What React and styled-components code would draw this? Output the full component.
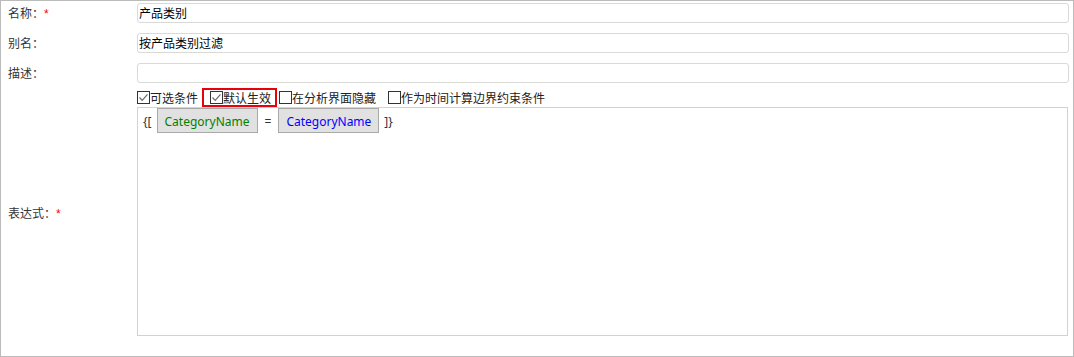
import React from "react";
import styled, { createGlobalStyle } from "styled-components";

const Global = createGlobalStyle`
  html, body { margin: 0; padding: 0; background: #fff; }
  body { font-family: "Noto Sans CJK SC", "Noto Sans", sans-serif; font-size: 12px; color: #333; }
  * { box-sizing: border-box; }
`;

const Frame = styled.div`
  width: 1074px;
  height: 357px;
  border: 1px solid #bbbbbb;
  background: #fff;
`;

const Form = styled.div`
  display: grid;
  grid-template-columns: 136px 1fr;
  grid-template-rows: 30px 30px 25px 19px 229px;
  padding: 2px 4px 20px 0;
`;

const Label = styled.div`
  padding-left: 7px;
  height: 20px;
  line-height: 20px;
  font-size: 12px;
  color: #333;
  white-space: nowrap;
  ${(p) => p.$span && `grid-row: span ${p.$span}; align-self: center; height: auto; margin-top: 2px;`}
`;

const Required = styled.span`
  color: #ff0000;
  font-family: "Liberation Sans", sans-serif;
  font-size: 12px;
`;

const Input = styled.div`
  height: 20px;
  border: 1px solid #d9d9d6;
  border-radius: 3px;
  padding-left: 1px;
  line-height: 18px;
  font-size: 12px;
  color: #000;
  white-space: nowrap;
`;

const OptionRow = styled.div`
  display: flex;
  align-items: stretch;
  height: 19px;
`;

const Option = styled.label`
  position: relative;
  display: flex;
  align-items: center;
  margin-right: ${(p) => p.$gap || 0}px;
  font-size: 12px;
  color: #222;
  white-space: nowrap;
  ${(p) =>
    p.$highlight &&
    `&::after {
      content: "";
      position: absolute;
      top: 0;
      bottom: 0;
      left: -8px;
      right: -6px;
      border: 2px solid #e8000b;
      pointer-events: none;
    }`}
`;

const Box = styled.svg`
  width: 13px;
  height: 13px;
  flex: none;
  display: block;
`;

const Check = ({ checked }) => (
  <Box viewBox="0 0 13 13">
    <rect x="0.5" y="0.5" width="12" height="12" fill="#fff" stroke="#333" strokeWidth="1" />
    {checked && (
      <path d="M2.5 6.5 L5.2 9.3 L10.5 3.3" fill="none" stroke="#6a6a6a" strokeWidth="1.2" />
    )}
  </Box>
);

const Expression = styled.div`
  border: 1px solid #d4d2cc;
  margin-right: 1px;
  padding: 0 5px;
  display: flex;
  align-items: flex-start;
  gap: 5px;
`;

const Bracket = styled.span`
  font-family: "Noto Sans", sans-serif;
  font-size: 12px;
  color: #333;
  line-height: 25px;
  padding-top: 1px;
  ${(p) => p.$op && `margin: 0 2px;`}
`;

const Token = styled.span`
  height: 25px;
  line-height: 23px;
  border: 1px solid #a9a9a9;
  background: #e1e1e1;
  padding: 1px 7px 0;
  font-family: "Noto Sans", sans-serif;
  font-size: 12px;
  color: ${(p) => p.$color};
`;

export default function App() {
  return (
    <>
      <Global />
      <Frame>
        <Form>
          <Label>
            名称：<Required>*</Required>
          </Label>
          <Input>产品类别</Input>
          <Label>别名：</Label>
          <Input>按产品类别过滤</Input>
          <Label>描述：</Label>
          <Input />
          <Label $span={2}>
            表达式：<Required>*</Required>
          </Label>
          <OptionRow>
            <Option $gap={12}>
              <Check checked />
              可选条件
            </Option>
            <Option $gap={8} $highlight>
              <Check checked />
              默认生效
            </Option>
            <Option $gap={12}>
              <Check />
              在分析界面隐藏
            </Option>
            <Option>
              <Check />
              作为时间计算边界约束条件
            </Option>
          </OptionRow>
          <Expression>
            <Bracket>{"{["}</Bracket>
            <Token $color="#008000">CategoryName</Token>
            <Bracket $op>=</Bracket>
            <Token $color="#0000ff">CategoryName</Token>
            <Bracket>{"]}"}</Bracket>
          </Expression>
        </Form>
      </Frame>
    </>
  );
}
